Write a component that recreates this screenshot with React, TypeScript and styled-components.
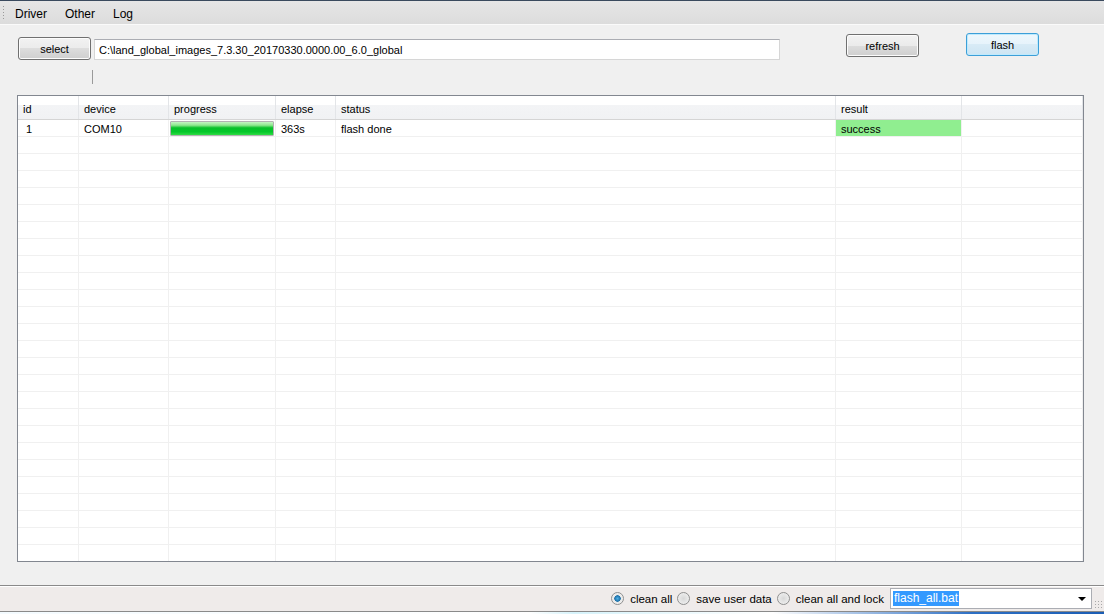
import React from "react";
import styled, { createGlobalStyle } from "styled-components";

const Global = createGlobalStyle`
    html, body {
        margin: 0;
        padding: 0;
        background: #f0f0f0;
    }
    body {
        font-family: "Liberation Sans", Arial, sans-serif;
        font-size: 11px;
        color: #000;
    }
`;

const Window = styled.div`
    width: 1104px;
    height: 614px;
    display: flex;
    flex-direction: column;
    overflow: hidden;
    border-top: 1px solid #3a4a5e;
    box-sizing: border-box;
`;

const MenuBar = styled.div`
    height: 23px;
    display: flex;
    align-items: center;
    background: linear-gradient(#e6e6e6, #dcdcdc);
    border-bottom: 1px solid #fafafa;
    padding-left: 2px;
`;

const Grip = styled.div`
    width: 3px;
    height: 15px;
    margin-right: 1px;
    background-image: radial-gradient(circle, #9a9a9a 0.8px, transparent 1px);
    background-size: 3px 3px;
`;

const MenuItem = styled.span`
    padding: 0 9px;
    margin-right: 0;
    font-size: 12px;
    margin-top: 2px;
`;

const Main = styled.div`
    flex: 1;
    display: flex;
    flex-direction: column;
    background: #f0f0f0;
`;

const Toolbar = styled.div`
    display: flex;
    align-items: flex-start;
    height: 45px;
    padding-left: 18px;
`;

const Button = styled.button<{ top: number; left?: number; focused?: boolean }>`
    width: 73px;
    height: 23px;
    margin-top: ${(p) => p.top}px;
    margin-left: ${(p) => p.left ?? 0}px;
    padding: 0;
    font-family: "Liberation Sans", Arial, sans-serif;
    font-size: 11px;
    color: #000;
    border-radius: 3px;
    border: 1px solid ${(p) => (p.focused ? "#3c9fd8" : "#707070")};
    box-shadow: inset 0 0 0 1px ${(p) => (p.focused ? "#bfeafd" : "#fcfcfc")};
    background: ${(p) =>
        p.focused
            ? "linear-gradient(#eef7fc 0%, #e6f3fb 50%, #d8ebf6 50%, #cde5f3 100%)"
            : "linear-gradient(#f2f2f2 0%, #ebebeb 50%, #dddddd 50%, #cfcfcf 100%)"};
`;

const PathInput = styled.div`
    width: 680px;
    height: 19px;
    margin-top: 14px;
    margin-left: 3px;
    padding-left: 4px;
    display: flex;
    align-items: center;
    background: #fff;
    border: 1px solid #d6d6d6;
    border-top-color: #abadb3;
    white-space: nowrap;
`;

const Caret = styled.div`
    width: 1px;
    height: 14px;
    margin: 0 0 11px 92px;
    background: #9a9a9a;
`;

const Grid = styled.div`
    margin-left: 17px;
    width: 1067px;
    height: 467px;
    box-sizing: border-box;
    border: 1px solid #828790;
    background: #fff;
    overflow: hidden;
`;

const COLS = "61px 90px 107px 60px 500px 126px 121px";

const HeaderRow = styled.div`
    display: grid;
    grid-template-columns: ${COLS};
    height: 23px;
    background: linear-gradient(#ffffff 0%, #ffffff 40%, #f3f4f6 40%, #f1f2f4 100%);
    border-bottom: 1px solid #d5d5d5;
`;

const HeaderCell = styled.div`
    display: flex;
    align-items: center;
    padding: 2px 0 0 5px;
    border-right: 1px solid #e3e5e8;
    color: #000;
`;

const Row = styled.div`
    display: grid;
    grid-template-columns: ${COLS};
    height: 16px;
    border-bottom: 1px solid #f0f0f0;
    box-sizing: content-box;
`;

const Cell = styled.div<{ fill?: string }>`
    display: flex;
    align-items: center;
    padding: 2px 0 0 5px;
    border-right: 1px solid #f0f0f0;
    background: ${(p) => p.fill ?? "transparent"};
    white-space: nowrap;
    overflow: hidden;
`;

const BarCell = styled.div`
    display: flex;
    align-items: stretch;
    padding: 1px 1px 0 1px;
    border-right: 1px solid #f0f0f0;
`;

const Bar = styled.div`
    flex: 1;
    border: 1px solid #b2b2b2;
    border-radius: 1px;
    background: linear-gradient(
        #c4f4c4 0%,
        #8ee88e 25%,
        #08c02a 45%,
        #04c82a 75%,
        #30dc44 100%
    );
`;

const StatusStrip = styled.div`
    height: 25px;
    border-top: 1px solid #8a8a8a;
    border-bottom: 1px solid #8a8a8a;
    box-shadow: inset 0 1px 0 #ffffff;
    background: #efebea;
    display: flex;
    align-items: center;
    justify-content: flex-end;
`;

const Radio = styled.span<{ checked?: boolean }>`
    width: 11px;
    height: 11px;
    border-radius: 50%;
    border: 1px solid #8f8f8f;
    background: ${(p) =>
        p.checked
            ? "radial-gradient(circle, #4fb1e6 0%, #1c6fa8 38%, #e8e8e8 45%, #f6f6f6 100%)"
            : "radial-gradient(circle, #d8d8d8 0%, #f4f4f4 100%)"};
    margin-right: 6px;
    margin-left: 5px;
`;

const RadioLabel = styled.span`
    font-size: 11.5px;
    color: #000;
`;

const Combo = styled.div`
    width: 198px;
    height: 19px;
    margin-left: 6px;
    border: 1px solid #abadb3;
    background: #fff;
    display: flex;
    align-items: center;
    padding-left: 2px;
    box-sizing: content-box;
`;

const Selected = styled.span`
    background: #3399ff;
    color: #fff;
    padding: 0 1px;
    font-size: 12px;
    line-height: 15px;
`;

const Arrow = styled.span`
    margin-left: auto;
    margin-right: 5px;
    width: 0;
    height: 0;
    border-left: 4px solid transparent;
    border-right: 4px solid transparent;
    border-top: 4px solid #000;
`;

const SizeGrip = styled.div`
    width: 10px;
    height: 10px;
    align-self: flex-end;
    margin: 0 0 1px 2px;
    background-image: radial-gradient(circle, #a8a8a8 0.8px, transparent 1px);
    background-size: 3px 3px;
`;

const Taskbar = styled.div`
    height: 2px;
    background: linear-gradient(90deg, #f4fbff 0%, #ffffff 48%, #d6f3fb 52%, #ffffff 70%, #2d6fc4 88%, #1b5db4 100%);
`;

const headers = ["id", "device", "progress", "elapse", "status", "result", ""];

const App = () => {
    const emptyRows = Array.from({ length: 26 });
    return (
        <Window>
            <Global />
            <MenuBar>
                <Grip />
                <MenuItem>Driver</MenuItem>
                <MenuItem>Other</MenuItem>
                <MenuItem>Log</MenuItem>
            </MenuBar>
            <Main>
                <Toolbar>
                    <Button top={12}>select</Button>
                    <PathInput>C:\land_global_images_7.3.30_20170330.0000.00_6.0_global</PathInput>
                    <Button top={9} left={66}>refresh</Button>
                    <Button top={8} left={47} focused>
                        flash
                    </Button>
                </Toolbar>
                <Caret />
                <Grid>
                    <HeaderRow>
                        {headers.map((h, i) => (
                            <HeaderCell key={i}>{h}</HeaderCell>
                        ))}
                    </HeaderRow>
                    <Row>
                        <Cell>&nbsp;1</Cell>
                        <Cell>COM10</Cell>
                        <BarCell>
                            <Bar />
                        </BarCell>
                        <Cell>363s</Cell>
                        <Cell>flash done</Cell>
                        <Cell fill="#90ee90">success</Cell>
                        <Cell />
                    </Row>
                    {emptyRows.map((_, r) => (
                        <Row key={r}>
                            {headers.map((_, c) => (
                                <Cell key={c} />
                            ))}
                        </Row>
                    ))}
                </Grid>
            </Main>
            <StatusStrip>
                <Radio checked />
                <RadioLabel>clean all</RadioLabel>
                <Radio />
                <RadioLabel>save user data</RadioLabel>
                <Radio />
                <RadioLabel>clean all and lock</RadioLabel>
                <Combo>
                    <Selected>flash_all.bat</Selected>
                    <Arrow />
                </Combo>
                <SizeGrip />
            </StatusStrip>
            <Taskbar />
        </Window>
    );
};

export default App;
